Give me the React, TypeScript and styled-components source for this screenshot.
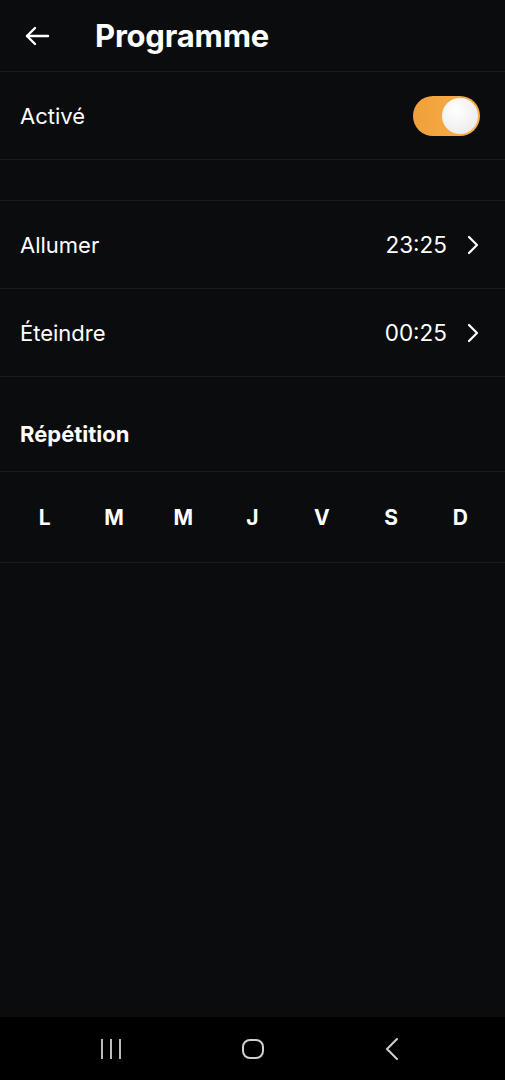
import React from 'react';
import styled, {createGlobalStyle} from "styled-components";

const GlobalStyle = createGlobalStyle`
    html, body {
        margin: 0;
        padding: 0;
        background: #0b0c0e;
    }
    body {
        font-family: Inter, "Noto Sans", "Liberation Sans", sans-serif;
        color: #ffffff;
    }
`

const days = ['L', 'M', 'M', 'J', 'V', 'S', 'D']

export default function App() {
    return (
        <Screen>
            <GlobalStyle/>
            <Header>
                <BackButton>
                    <svg width="26" height="22" viewBox="0 0 26 22" fill="none" stroke="#fff" strokeWidth="2.4"
                         strokeLinecap="round" strokeLinejoin="round">
                        <path d="M24 11H3"/>
                        <path d="M11 3L3 11L11 19"/>
                    </svg>
                </BackButton>
                <Title>Programme</Title>
            </Header>

            <Row>
                <Label>Activé</Label>
                <Switch>
                    <Knob/>
                </Switch>
            </Row>

            <Spacer/>

            <Row>
                <Label>Allumer</Label>
                <Value>23:25<Chevron/></Value>
            </Row>
            <Row>
                <Label>Éteindre</Label>
                <Value>00:25<Chevron/></Value>
            </Row>

            <SectionTitle>Répétition</SectionTitle>
            <DaysRow>
                {days.map((d, i) => <Day key={i}>{d}</Day>)}
            </DaysRow>

            <Fill/>

            <NavBar>
                <svg width="22" height="22" viewBox="0 0 22 22" fill="none" stroke="#d0d0d0" strokeWidth="1.8">
                    <path d="M2 1V21M11 1V21M20 1V21"/>
                </svg>
                <svg width="24" height="24" viewBox="0 0 24 24" fill="none" stroke="#d0d0d0" strokeWidth="2">
                    <rect x="2" y="3" width="20" height="18" rx="7"/>
                </svg>
                <svg width="16" height="24" viewBox="0 0 16 24" fill="none" stroke="#d0d0d0" strokeWidth="2"
                     strokeLinecap="round">
                    <path d="M13 2L3 12L13 22"/>
                </svg>
            </NavBar>
        </Screen>
    );
}

const Chevron = () => (
    <svg width="14" height="20" viewBox="0 0 14 20" fill="none" stroke="#fff" strokeWidth="2.2"
         strokeLinecap="round" strokeLinejoin="round">
        <path d="M3 2L11 10L3 18"/>
    </svg>
)

const Screen = styled.div`
    width: 505px;
    height: 1080px;
    display: flex;
    flex-direction: column;
    background: #0b0c0e;
`

const Header = styled.header`
    height: 72px;
    display: flex;
    align-items: center;
    border-bottom: 1px solid #1a1b1e;
    padding-left: 24px;
    box-sizing: border-box;
`

const BackButton = styled.div`
    width: 26px;
    height: 22px;
    display: flex;
    margin-right: 45px;
`

const Title = styled.h1`
    margin: 0;
    font-size: 31px;
    font-weight: 700;
    letter-spacing: -0.2px;
`

const Row = styled.div`
    height: 88px;
    display: flex;
    align-items: center;
    justify-content: space-between;
    padding: 0 25px 0 20px;
    border-bottom: 1px solid #1a1b1e;
    box-sizing: border-box;
`

const Label = styled.span`
    font-size: 22px;
`

const Value = styled.span`
    display: flex;
    align-items: center;
    gap: 19px;
    font-size: 22.5px;
`

const Switch = styled.div`
    width: 67px;
    height: 40px;
    border-radius: 20px;
    background: linear-gradient(90deg, #f0a03a, #f8ae4a);
    display: flex;
    align-items: center;
    justify-content: flex-end;
    padding: 2px;
    box-sizing: border-box;
`

const Knob = styled.div`
    width: 36px;
    height: 36px;
    border-radius: 50%;
    background: radial-gradient(circle at 40% 35%, #ffffff, #e6e6e6);
`

const Spacer = styled.div`
    height: 40px;
    border-bottom: 1px solid #1a1b1e;
`

const SectionTitle = styled.h2`
    margin: 0;
    height: 95px;
    display: flex;
    align-items: center;
    padding: 20px 20px 0;
    font-size: 22px;
    font-weight: 700;
    border-bottom: 1px solid #1a1b1e;
    box-sizing: border-box;
`

const DaysRow = styled.div`
    height: 91px;
    display: grid;
    grid-template-columns: repeat(7, 1fr);
    align-items: center;
    padding: 0 10px;
    border-bottom: 1px solid #1a1b1e;
    box-sizing: border-box;
`

const Day = styled.span`
    text-align: center;
    font-size: 21px;
    font-weight: 700;
`

const Fill = styled.div`
    flex: 1;
`

const NavBar = styled.nav`
    height: 63px;
    background: #000000;
    display: flex;
    align-items: center;
    justify-content: space-between;
    padding: 0 105px 0 100px;
`
